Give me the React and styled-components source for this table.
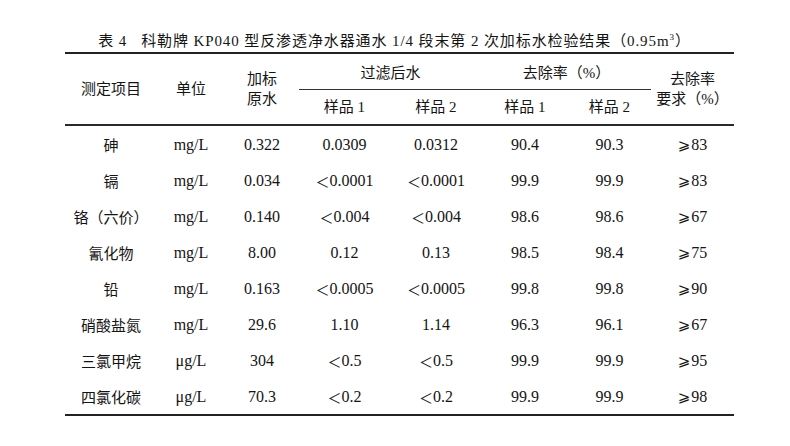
import React from 'react'
import styled, { createGlobalStyle } from 'styled-components'

const GlobalStyle = createGlobalStyle`
  body {
    margin: 0;
    background: #ffffff;
    color: #141414;
    font-family: "Liberation Serif", "Noto Sans CJK SC", serif;
  }
`

const COLS = '92px 68px 74px 91px 92px 86px 83px 83px'

const Page = styled.div`
  width: 669px;
  padding: 31px 0 0 65px;
`

const Caption = styled.div`
  font-size: 15px;
  line-height: 20px;
  letter-spacing: 0.9px;
  text-align: center;
  white-space: nowrap;
  margin-bottom: 1px;
  padding-right: 10px;

  > span.gap {
    display: inline-block;
    width: 14px;
  }
  sup {
    font-size: 9px;
    line-height: 0;
  }
`

const Head = styled.div`
  display: grid;
  grid-template-columns: ${COLS};
  grid-template-rows: 36px 34px;
  border-top: 2px solid #222;
  border-bottom: 2px solid #2a2a2a;
`

const HeadCell = styled.div`
  grid-column: ${p => p.$col};
  grid-row: ${p => p.$row};
  display: flex;
  flex-direction: column;
  align-items: center;
  justify-content: center;
  font-size: 15px;
  line-height: 20px;
  text-align: center;
  border-bottom: ${p => (p.$rule ? '1px solid #333' : 'none')};
  padding-top: ${p => (p.$rule ? '2px' : '0')};
`

const Body = styled.div`
  display: grid;
  grid-template-columns: ${COLS};
  grid-auto-rows: 36px;
  border-bottom: 2px solid #222;
`

const Cell = styled.div`
  display: flex;
  align-items: center;
  justify-content: center;
  font-size: ${p => (p.$cjk ? '15px' : '16px')};
  white-space: nowrap;
  padding-top: 1px;
`

const Sign = styled.span`
  font-family: "DejaVu Sans", "Noto Sans CJK SC", sans-serif;
  font-size: ${p => (p.$ge ? '15px' : '14px')};
  margin-right: ${p => (p.$ge ? '1px' : '0')};
`

const rows = [
  ['砷', 'mg/L', '0.322', '0.0309', '0.0312', '90.4', '90.3', '≥83'],
  ['镉', 'mg/L', '0.034', '<0.0001', '<0.0001', '99.9', '99.9', '≥83'],
  ['铬（六价）', 'mg/L', '0.140', '<0.004', '<0.004', '98.6', '98.6', '≥67'],
  ['氰化物', 'mg/L', '8.00', '0.12', '0.13', '98.5', '98.4', '≥75'],
  ['铅', 'mg/L', '0.163', '<0.0005', '<0.0005', '99.8', '99.8', '≥90'],
  ['硝酸盐氮', 'mg/L', '29.6', '1.10', '1.14', '96.3', '96.1', '≥67'],
  ['三氯甲烷', 'μg/L', '304', '<0.5', '<0.5', '99.9', '99.9', '≥95'],
  ['四氯化碳', 'μg/L', '70.3', '<0.2', '<0.2', '99.9', '99.9', '≥98'],
]

// scanned table uses wide "＜" and slanted "⩾" signs
const renderValue = (v) => {
  if (v.startsWith('<')) return <><Sign>＜</Sign>{v.slice(1)}</>
  if (v.startsWith('≥')) return <><Sign $ge>⩾</Sign>{v.slice(1)}</>
  return v
}

export default function App () {
  return (
    <>
      <GlobalStyle />
      <Page>
        <Caption>
          表 4<span className="gap" />
          科勒牌 KP040 型反渗透净水器通水 1/4 段末第 2 次加标水检验结果（0.95m<sup>3</sup>）
        </Caption>
        <Head>
          <HeadCell $col="1" $row="1 / 3">测定项目</HeadCell>
          <HeadCell $col="2" $row="1 / 3">单位</HeadCell>
          <HeadCell $col="3" $row="1 / 3">
            <span>加标</span>
            <span>原水</span>
          </HeadCell>
          <HeadCell $col="4 / 6" $row="1" $rule>过滤后水</HeadCell>
          <HeadCell $col="6 / 8" $row="1" $rule>去除率（%）</HeadCell>
          <HeadCell $col="8" $row="1 / 3">
            <span>去除率</span>
            <span>要求（%）</span>
          </HeadCell>
          <HeadCell $col="4" $row="2">样品 1</HeadCell>
          <HeadCell $col="5" $row="2">样品 2</HeadCell>
          <HeadCell $col="6" $row="2">样品 1</HeadCell>
          <HeadCell $col="7" $row="2">样品 2</HeadCell>
        </Head>
        <Body>
          {rows.map((row, i) =>
            row.map((v, j) => (
              <Cell key={`${i}-${j}`} $cjk={j === 0}>{renderValue(v)}</Cell>
            ))
          )}
        </Body>
      </Page>
    </>
  )
}
